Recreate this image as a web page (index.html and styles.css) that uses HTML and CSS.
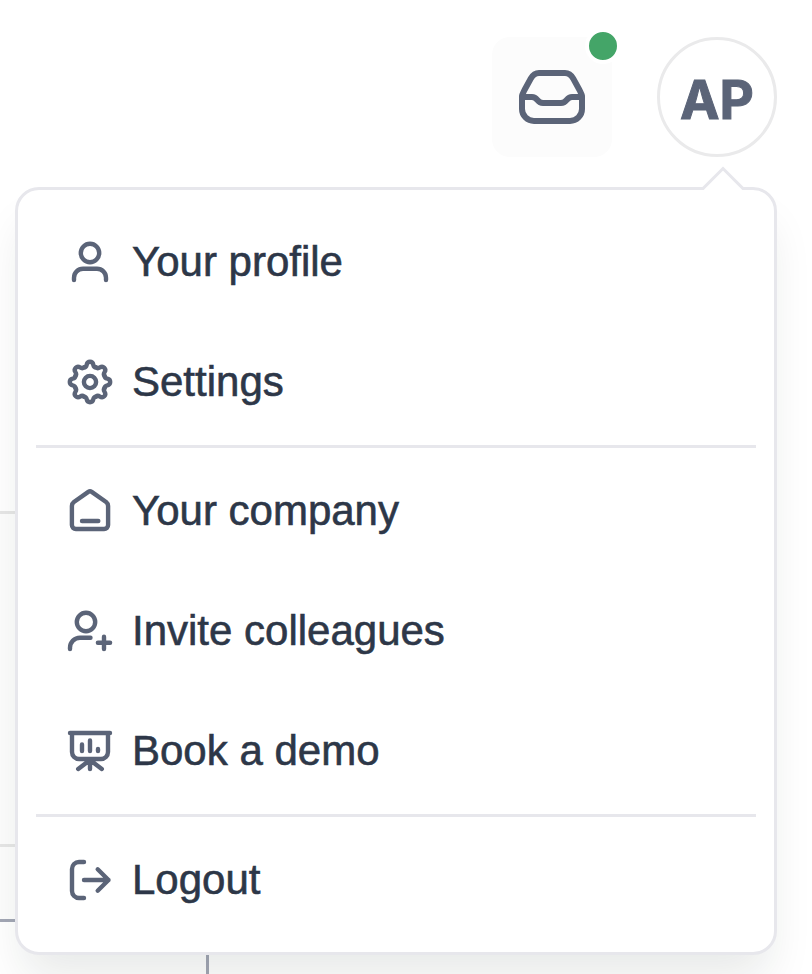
FILE: index.html
```
<!DOCTYPE html>
<html lang="en">
<head>
<meta charset="utf-8">
<title>Account menu</title>
<link rel="stylesheet" href="styles.css">
</head>
<body>
<header class="topbar">
  <button class="inbox" aria-label="Inbox">
    <svg class="inbox-icon" viewBox="0 0 72 72"><path d="M6 36 C6 33 7.500 31 8.500 29 L14.800 17.500 C16.800 14 19.500 12 23 12 H49 C52.500 12 55.200 14 57.200 17.500 L63.500 29 C64.500 31 66 33 66 36 V48 A12 12 0 0 1 54 60 H18 A12 12 0 0 1 6 48 Z"/><path d="M6 36 H16 C22 36 20.500 42 27 42 H45 C51.500 42 50 36 56 36 H66"/></svg>
    <span class="dot"></span>
  </button>
  <div class="account">
    <button class="avatar">AP</button>
    <nav class="menu">
      <svg class="caret" viewBox="0 0 46 25"><path class="caret-fill" d="M2 25 V22 L23 2 L44 22 V25 Z"/><path d="M1.500 22.500 H3 L23 2.500 L43 22.500 H44.500"/></svg>
      <a class="item"><svg class="icon" viewBox="0 0 48 48"><circle cx="24" cy="15" r="9.200"/><path d="M8 42 V39.700 A9 9 0 0 1 17 30.700 H31 A9 9 0 0 1 40 39.700 V42"/></svg>Your profile</a>
      <a class="item"><svg class="icon" viewBox="0 0 48 48"><defs><path id="tooth" d="M-6.050 -14.600 C-1.500 -14.800 -5.200 -20.200 0 -20.200 C5.200 -20.200 1.500 -14.800 6.050 -14.600"/></defs><g transform="translate(24 24)"><circle r="6.100"/><use href="#tooth"/><use href="#tooth" transform="rotate(45)"/><use href="#tooth" transform="rotate(90)"/><use href="#tooth" transform="rotate(135)"/><use href="#tooth" transform="rotate(180)"/><use href="#tooth" transform="rotate(225)"/><use href="#tooth" transform="rotate(270)"/><use href="#tooth" transform="rotate(315)"/></g></svg>Settings</a>
      <hr class="divider">
      <a class="item"><svg class="icon" viewBox="0 0 48 48"><path d="M5.900 19 Q5.900 16.500 7.900 15 L22.300 4.900 Q24 3.800 25.700 4.900 L40.100 15 Q42.100 16.500 42.100 19 V38 A4 4 0 0 1 38.100 42 H9.900 A4 4 0 0 1 5.900 38 Z"/><path d="M16 34 H32.300"/></svg>Your company</a>
      <a class="item"><svg class="icon" viewBox="0 0 48 48"><circle cx="20" cy="15" r="9.200"/><path d="M4 42 V40.700 A10 10 0 0 1 14 30.700 H24.500"/><path d="M38 29.700 V42 M31.900 35.800 H44.100"/></svg>Invite colleagues</a>
      <a class="item"><svg class="icon" viewBox="0 0 48 48"><path d="M4 6 H44 M6 6 V25 A7 7 0 0 0 13 32 H35 A7 7 0 0 0 42 25 V6 M24 32 V42 M24 33 L12.200 42 M24 33 L35.800 42 M16 17.500 V24 M24 13.500 V24 M32 22 V24"/></svg>Book a demo</a>
      <hr class="divider">
      <a class="item"><svg class="icon" viewBox="0 0 48 48"><path d="M18 6 H13 A7 7 0 0 0 6 13 V35 A7 7 0 0 0 13 42 H18"/><path d="M18 24 H42.500 M31.700 13.300 L42.500 24 L31.700 34.700"/></svg>Logout</a>
    </nav>
  </div>
</header>
<main class="canvas">
  <div class="band band-upper"></div>
  <div class="band band-lower"></div>
  <div class="connector"></div>
</main>
</body>
</html>
```
FILE: styles.css
```
* { box-sizing: border-box; }
body {
  margin: 0;
  height: 974px;
  overflow: hidden;
  background: #fff;
  color: #2d3748;
  font-family: "Liberation Sans", Arial, sans-serif;
}
.topbar {
  display: flex;
  justify-content: flex-end;
  gap: 45px;
  height: 511px;
  padding: 37px 35px 0 0;
}
button { padding: 0; font: inherit; color: #5b6478; }
.inbox {
  position: relative;
  display: grid;
  place-items: center;
  width: 120px;
  height: 120px;
  border: 0;
  border-radius: 18px;
  background: #fcfcfc;
}
svg {
  display: block;
  fill: none;
  stroke: #5b6478;
  stroke-linecap: round;
  stroke-linejoin: round;
}
.inbox-icon { width: 72px; height: 72px; stroke-width: 6; }
.dot {
  position: absolute;
  top: -9px;
  right: -9px;
  width: 36px;
  height: 36px;
  border: 4px solid #fff;
  border-radius: 50%;
  background: #44a568;
}
.account { position: relative; height: 120px; }
.avatar {
  display: block;
  width: 120px;
  height: 120px;
  padding-top: 6px;
  border: 3px solid #eaeaeb;
  border-radius: 50%;
  background: #fff;
  font: 700 53px/1 Inter, sans-serif;
  -webkit-text-stroke: 1px;
}
.menu {
  position: absolute;
  z-index: 1;
  top: 150px;
  right: 0;
  width: 762px;
  height: 768px;
  padding: 12px 18px;
  border: 3px solid #e7e7ec;
  border-radius: 24px;
  background: #fff;
  box-shadow: 0 30px 45px -9px rgba(20, 35, 30, .1);
}
.caret {
  position: absolute;
  top: -24px;
  right: 28px;
  width: 46px;
  height: 25px;
  stroke: #e7e7ec;
  stroke-width: 3;
  stroke-linejoin: miter;
  stroke-linecap: butt;
}
.caret-fill { fill: #fff; stroke: none; }
.item {
  display: flex;
  align-items: center;
  gap: 18px;
  height: 120px;
  padding-left: 30px;
  font-size: 42px;
  line-height: 60px;
  -webkit-text-stroke: .6px;
}
.icon { flex: none; width: 48px; height: 48px; stroke-width: 4.4; }
.divider { height: 3px; margin: 3px 0; border: 0; background: #e7e7ec; }
.band { width: 100px; border-top: 3px solid #e6e6e6; background: #fdfdfd; }
.band-upper { height: 333px; }
.band-lower { height: 78px; border-bottom: 3px solid #a3a7b5; }
.connector { width: 3px; height: 52px; margin-left: 206px; background: #a3a7b5; }
```
